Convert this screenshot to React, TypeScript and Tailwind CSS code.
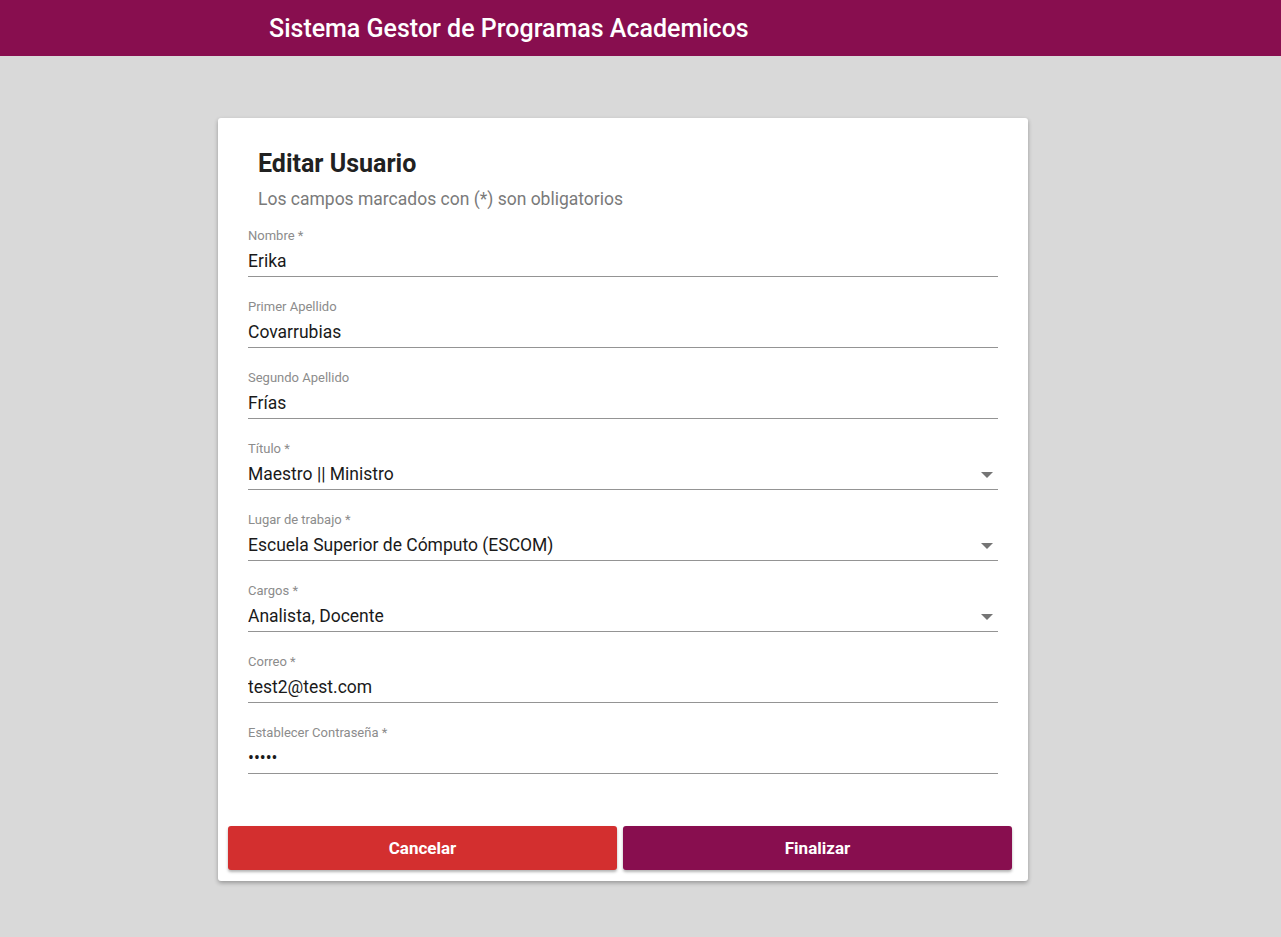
import React from 'react';

type Field = {
    label: string;
    value: string;
    select?: boolean;
    password?: boolean;
};

const FIELDS: Field[] = [
    { label: 'Nombre *', value: 'Erika' },
    { label: 'Primer Apellido', value: 'Covarrubias' },
    { label: 'Segundo Apellido', value: 'Frías' },
    { label: 'Título *', value: 'Maestro || Ministro', select: true },
    { label: 'Lugar de trabajo *', value: 'Escuela Superior de Cómputo (ESCOM)', select: true },
    { label: 'Cargos *', value: 'Analista, Docente', select: true },
    { label: 'Correo *', value: 'test2@test.com' },
    { label: 'Establecer Contraseña *', value: '12345', password: true },
];

const FormField = ({ field }: { field: Field }) => (
    <div className="flex flex-col pb-[23px]">
        <label className="text-[13px] leading-[14px] text-[#8c8c8c]">{field.label}</label>
        <div className="mt-1 flex h-[30px] items-center border-b border-[#949494]">
            <input
                readOnly
                type={field.password ? 'password' : 'text'}
                value={field.value}
                className="w-full bg-transparent text-[17.5px] text-[#1a1a1a] outline-none"
            />
            {field.select && (
                <span className="mr-[5px] h-0 w-0 border-x-[6px] border-t-[6px] border-x-transparent border-t-[#757575]" />
            )}
        </div>
    </div>
);

export default function App() {
    return (
        <div className="min-h-screen bg-[#d9d9d9] font-['Roboto',sans-serif]">
            <header className="flex h-14 items-center bg-[#880e4f] pt-[2px] pl-[269px]">
                <h1 className="text-[25px] font-medium text-white">Sistema Gestor de Programas Academicos</h1>
            </header>

            <div className="flex pt-[62px] pb-14 pl-[218px]">
                <div className="w-[810px] rounded-[3px] bg-white pt-[30px] pb-[11px] shadow-[0_2px_4px_rgba(0,0,0,0.3)]">
                    <div className="px-[30px]">
                        <h2 className="pl-[10px] text-[25px] font-bold leading-8 text-[#212121]">Editar Usuario</h2>
                        <p className="mt-[7px] pl-[10px] text-[17.5px] leading-6 text-[#7a7a7a]">
                            Los campos marcados con (*) son obligatorios
                        </p>
                        <div className="mt-[18px] flex flex-col">
                            {FIELDS.map(f => (
                                <FormField key={f.label} field={f} />
                            ))}
                        </div>
                    </div>

                    <div className="mt-[29px] flex gap-[6px] pl-[10px] pr-[16px]">
                        <button className="h-11 flex-1 rounded-[3px] bg-[#d32f2f] pt-[2px] text-[17px] font-bold text-white shadow-[0_2px_3px_rgba(0,0,0,0.3)]">
                            Cancelar
                        </button>
                        <button className="h-11 flex-1 rounded-[3px] bg-[#880e4f] pt-[2px] text-[17px] font-bold text-white shadow-[0_2px_3px_rgba(0,0,0,0.3)]">
                            Finalizar
                        </button>
                    </div>
                </div>
            </div>
        </div>
    );
}
